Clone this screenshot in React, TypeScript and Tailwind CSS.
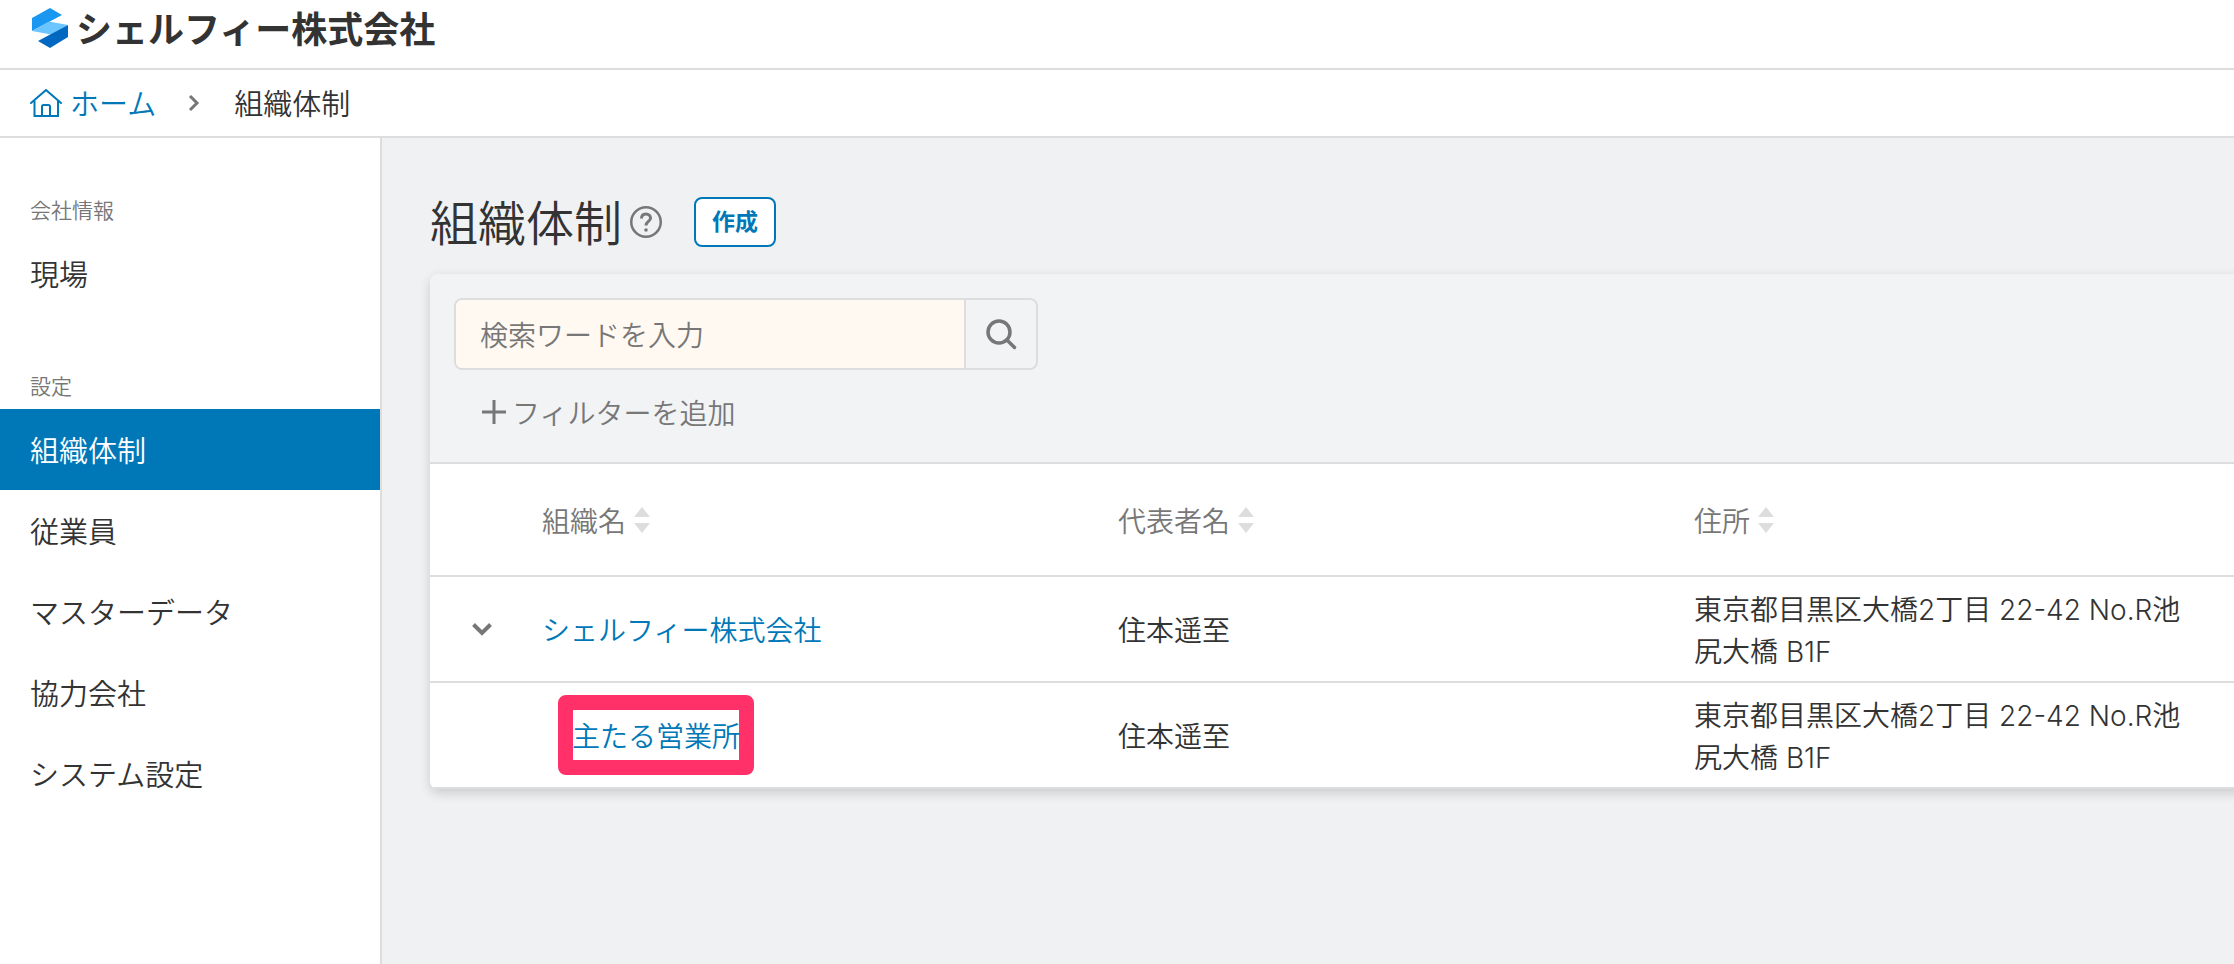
import React, { useState } from 'react';

interface Organization {
  name: string;
  representative: string;
  address: string;
  child?: boolean;
}

interface NavGroup {
  title: string;
  items: string[];
}

const navGroups: NavGroup[] = [
  { title: '会社情報', items: ['現場'] },
  { title: '設定', items: ['組織体制', '従業員', 'マスターデータ', '協力会社', 'システム設定'] },
];

const columns = ['組織名', '代表者名', '住所'];

const organizations: Organization[] = [
  {
    name: 'シェルフィー株式会社',
    representative: '住本遥至',
    address: '東京都目黒区大橋2丁目 22-42 No.R池尻大橋 B1F',
  },
  {
    name: '主たる営業所',
    representative: '住本遥至',
    address: '東京都目黒区大橋2丁目 22-42 No.R池尻大橋 B1F',
    child: true,
  },
];

const Logo: React.FC = () => (
  <svg viewBox="0 0 36 40" className="h-10 w-9" aria-hidden="true">
    <path d="M0 10 18 0 30 7 0 23Z" fill="#1a97f0" />
    <path d="M0 23 17 13.500 36 17 19 26.500Z" fill="#6bc5ff" />
    <path d="M36 17V29L18 40 6 33Z" fill="#0068c0" />
  </svg>
);

const SortIcon: React.FC = () => (
  <svg viewBox="0 0 16 26" className="h-[26px] w-4" fill="#dddddd" aria-hidden="true">
    <path d="M8 0 16 10H0Z" />
    <path d="M0 16H16L8 26Z" />
  </svg>
);

const Header: React.FC = () => (
  <header className="border-b-2 border-[#dddddd] bg-white px-8 pb-3">
    <div className="flex h-14 items-center gap-2">
      <Logo />
      <p className="pb-0.5 text-4xl font-bold">シェルフィー株式会社</p>
    </div>
  </header>
);

const Breadcrumb: React.FC = () => (
  <nav
    aria-label="パンくず"
    className="flex h-[68px] items-center border-b-2 border-[#dddddd] bg-white px-[30px] text-[29px]"
  >
    <a href="#home" className="flex items-center gap-2 text-[#0078b8]">
      <svg viewBox="0 0 32 28" className="h-7 w-8" fill="none" stroke="currentColor" strokeWidth="2" aria-hidden="true">
        <path d="M1 14 16 1 31 14" strokeLinecap="round" />
        <path d="M4.500 11.500V27H28V11.500" />
        <path d="M12 27V17.500A1.500 1.500 0 0 1 13.500 16H18.500A1.500 1.500 0 0 1 20 17.500V27" />
      </svg>
      ホーム
    </a>
    <svg viewBox="0 0 12 18" className="mr-[34px] ml-8 h-[18px] w-3" fill="none" stroke="#777777" strokeWidth="3" aria-hidden="true">
      <path d="M2 2 9 9 2 16" />
    </svg>
    <span>組織体制</span>
  </nav>
);

const Sidebar: React.FC<{ current: string }> = ({ current }) => (
  <aside className="w-[382px] shrink-0 border-r-2 border-[#dddddd] bg-white">
    {navGroups.map((group) => (
      <div key={group.title}>
        <h2 className="px-[30px] pt-14 pb-2 text-[21px] leading-[31px] text-[#777777]">{group.title}</h2>
        <ul>
          {group.items.map((item) => (
            <li key={item}>
              <a
                href="#menu"
                aria-current={item === current ? 'page' : undefined}
                className={`flex h-[81px] items-center px-[30px] text-[29px] ${
                  item === current ? 'bg-[#0078b8] text-white' : ''
                }`}
              >
                {item}
              </a>
            </li>
          ))}
        </ul>
      </div>
    ))}
  </aside>
);

const SearchArea: React.FC = () => {
  const [keyword, setKeyword] = useState('');

  return (
    <div className="border-b-2 border-[#dddddd] px-6 pt-6 pb-7">
      <form
        className="flex h-[72px] w-[584px] overflow-hidden rounded-lg border-2 border-[#dddddd]"
        onSubmit={(e) => e.preventDefault()}
      >
        <input
          type="text"
          aria-label="検索ワード"
          placeholder="検索ワードを入力"
          value={keyword}
          onChange={(e) => setKeyword(e.target.value)}
          className="min-w-0 flex-1 bg-[#fff9f2] px-6 text-[28px] outline-none placeholder:text-[#777777]"
        />
        <button
          type="submit"
          aria-label="検索"
          className="flex w-[72px] items-center justify-center border-l-2 border-[#dddddd] text-[#777777]"
        >
          <svg viewBox="0 0 32 32" className="h-8 w-8" fill="none" stroke="currentColor" strokeWidth="3.500" aria-hidden="true">
            <circle cx="14" cy="14" r="11" />
            <path d="M22 22 29.500 29.500" strokeLinecap="round" />
          </svg>
        </button>
      </form>
      <button type="button" className="mt-5 flex h-11 items-center gap-1.5 pl-7 text-[28px] text-[#777777]">
        <svg viewBox="0 0 24 24" className="h-6 w-6" stroke="currentColor" strokeWidth="3" aria-hidden="true">
          <path d="M12 0V24M0 12H24" />
        </svg>
        フィルターを追加
      </button>
    </div>
  );
};

const OrganizationTable: React.FC = () => (
  <table className="w-full table-fixed text-left text-[28px] leading-[42px]">
    <colgroup>
      <col className="w-20" />
      <col className="w-[576px]" />
      <col className="w-[576px]" />
      <col />
    </colgroup>
    <thead>
      <tr className="h-28 border-b-2 border-[#dddddd] bg-white text-[#777777]">
        <td></td>
        {columns.map((column) => (
          <th key={column} scope="col" className="px-8 font-[350]">
            <button type="button" className="flex items-center gap-2">
              {column}
              <SortIcon />
            </button>
          </th>
        ))}
      </tr>
    </thead>
    <tbody>
      {organizations.map((org) => (
        <tr key={org.name} className="border-b-2 border-[#dddddd] bg-white">
          <td>
            {!org.child && (
              <button type="button" aria-label="折りたたむ" className="ml-[42px] block">
                <svg viewBox="0 0 20 13" className="h-[13px] w-5" fill="none" stroke="#777777" strokeWidth="4" aria-hidden="true">
                  <path d="M1.500 1.500 10 10 18.500 1.500" />
                </svg>
              </button>
            )}
          </td>
          <td className={org.child ? 'pr-8 pl-[62px]' : 'px-8'}>
            <div className="relative w-fit">
              {org.child && (
                <span className="absolute -inset-x-[14px] -inset-y-[19px] rounded-lg border-[15px] border-[#ff3168]"></span>
              )}
              <a href="#organization" className="relative text-[#0078b8]">
                {org.name}
              </a>
            </div>
          </td>
          <td className="px-8">{org.representative}</td>
          <td className="pt-3 pr-11 pb-2 pl-8 font-['Inter','Noto_Sans_CJK_JP',sans-serif]">{org.address}</td>
        </tr>
      ))}
    </tbody>
  </table>
);

const App: React.FC = () => {
  return (
    <div className="flex min-h-screen flex-col bg-[#eff1f3] font-['Noto_Sans_CJK_JP',sans-serif] font-[350] text-[#333333]">
      <Header />
      <Breadcrumb />
      <div className="flex flex-1">
        <Sidebar current="組織体制" />
        <main className="min-w-0 flex-1 overflow-hidden pt-[59px] pl-12">
          <div className="flex h-[50px] items-center">
            <h1 className="pb-1 text-5xl">組織体制</h1>
            <button type="button" aria-label="ヘルプ" className="ml-2 text-[#777777]">
              <svg viewBox="0 0 32 32" className="h-8 w-8" fill="none" stroke="currentColor" aria-hidden="true">
                <circle cx="16" cy="16" r="14.750" strokeWidth="2.500" />
                <path d="M11.500 12.500C11.500 9.500 13.500 8 16 8S20.500 9.700 20.500 12.200C20.500 15.500 16 15.500 16 19.500" strokeWidth="3" />
                <circle cx="16" cy="24" r="1.800" fill="currentColor" stroke="none" />
              </svg>
            </button>
            <button
              type="button"
              className="ml-8 h-[50px] rounded-lg border-2 border-[#0078b8] bg-white px-4 pb-1 text-[23px] font-bold text-[#0078b8]"
            >
              作成
            </button>
          </div>
          <section className="mt-[27px] -mr-3 overflow-hidden rounded-l-lg bg-[#f1f3f5] shadow-[0_4px_12px_rgba(0,0,0,0.16)]">
            <SearchArea />
            <OrganizationTable />
          </section>
        </main>
      </div>
    </div>
  );
};

export default App;
